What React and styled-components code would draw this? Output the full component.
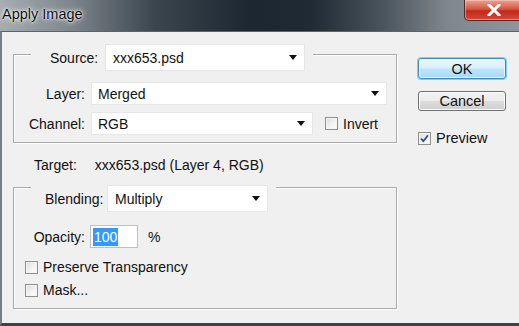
import React from "react";
import styled, { createGlobalStyle } from "styled-components";

const GlobalStyle = createGlobalStyle`
  html, body {
    margin: 0;
    padding: 0;
    background: #f0f0f0;
  }
  body {
    font-family: "Liberation Sans", Arial, sans-serif;
    font-size: 14px;
    color: #111;
  }
`;

const Window = styled.div`
  width: 519px;
  height: 326px;
  overflow: hidden;
  display: flex;
  flex-direction: column;
  background: #f0f0f0;
`;

const TitleBar = styled.div`
  height: 31px;
  flex: none;
  display: flex;
  align-items: flex-start;
  justify-content: space-between;
  background: linear-gradient(
    90deg,
    #a7adb1 0%,
    #7d858b 14%,
    #3a454e 30%,
    #1c2731 48%,
    #1f2a34 60%,
    #4b555d 74%,
    #80878c 86%,
    #8e9499 100%
  );
`;

const Title = styled.div`
  margin: 6px 0 0 2px;
  font-size: 14.5px;
  color: #0a0a0a;
  text-shadow: 0 0 6px #fff, 0 0 3px #fff, 0 0 1px #fff;
`;

const CloseButton = styled.div`
  width: 58px;
  height: 20px;
  margin-right: -5px;
  display: flex;
  align-items: center;
  justify-content: center;
  border: 1px solid #5a2420;
  border-top: none;
  border-radius: 0 0 5px 5px;
  background: linear-gradient(180deg, #e9a596 0%, #d8553f 45%, #c3281a 55%, #d24b36 100%);
  box-shadow: inset 0 0 0 1px rgba(255, 210, 200, 0.5);
`;

const Client = styled.div`
  flex: 1;
  display: flex;
  border-top: 1px solid #5b646c;
  border-left: 2px solid #767d83;
  border-bottom: 3px solid #3d4247;
  padding-left: 11px;
  background: #f0f0f0;
`;

const LeftColumn = styled.div`
  width: 384px;
  padding-top: 22px;
  display: flex;
  flex-direction: column;
`;

const GroupBox = styled.div`
  border: 1px solid #a9a9a9;
  box-shadow: inset 1px 1px 0 #fff, 1px 1px 0 #fff;
  display: flex;
  flex-direction: column;
  padding-bottom: ${({ $bottom }) => $bottom}px;
`;

const Legend = styled.div`
  display: flex;
  align-items: center;
  align-self: flex-start;
  margin: ${({ $top }) => $top}px 0 0 17px;
  padding: 0 8px 0 ${({ $pad }) => $pad}px;
  background: #f0f0f0;
  height: 27px;
`;

const LegendLabel = styled.span`
  width: ${({ $w }) => $w}px;
  flex: none;
  white-space: nowrap;
`;

const Row = styled.div`
  display: flex;
  align-items: center;
  height: ${({ $h }) => $h || 23}px;
  margin-top: ${({ $top }) => $top}px;
  padding-left: ${({ $pad }) => $pad || 0}px;
`;

const Label = styled.span`
  width: 71px;
  flex: none;
  text-align: right;
  margin-right: ${({ $gap }) => $gap}px;
  white-space: nowrap;
`;

const Select = styled.div`
  width: ${({ $w }) => $w}px;
  height: ${({ $h }) => $h || 23}px;
  box-sizing: border-box;
  flex: none;
  display: flex;
  align-items: center;
  justify-content: space-between;
  padding: 0 7px 0 ${({ $pad }) => $pad || 6}px;
  background: #fff;
  border: 1px solid #e6e6e6;
`;

const Arrow = styled.span`
  width: 0;
  height: 0;
  border-left: 4px solid transparent;
  border-right: 4px solid transparent;
  border-top: 5px solid #111;
`;

const Box = styled.span`
  width: 13px;
  height: 13px;
  box-sizing: border-box;
  flex: none;
  display: inline-flex;
  align-items: center;
  justify-content: center;
  border: 1px solid #8e8f8f;
  background: linear-gradient(135deg, #dcdcdc 0%, #f4f4f4 60%, #fbfbfb 100%);
  box-shadow: inset 0 0 0 1px #f4f4f4;
  margin-right: 5px;
`;

const Check = ({ checked }) => (
  <Box>
    {checked && (
      <svg width="9" height="9" viewBox="0 0 9 9">
        <path d="M1 4.6 L3.4 7.2 L8 1.2" fill="none" stroke="#2b4c91" strokeWidth="1.8" />
      </svg>
    )}
  </Box>
);

const Spacer = styled.span`
  width: ${({ $w }) => $w}px;
  flex: none;
`;

const TargetRow = styled.div`
  height: 16px;
  margin: 14px 0 14px 21px;
  display: flex;
  align-items: center;
  gap: 18px;
`;

const OpacityInput = styled.div`
  width: 48px;
  height: 23px;
  box-sizing: border-box;
  flex: none;
  display: flex;
  align-items: center;
  padding-left: 2px;
  background: #fff;
  border: 1px solid #b5c2cf;
`;

const Selected = styled.span`
  background: #3399ff;
  color: #fff;
  padding: 1px 1px;
  line-height: 16px;
`;

const Percent = styled.span`
  margin-left: 10px;
`;

const RightColumn = styled.div`
  margin-left: 21px;
  padding-top: 26px;
  display: flex;
  flex-direction: column;
  align-items: flex-start;
`;

const Button = styled.div`
  width: 88px;
  height: ${({ $h }) => $h}px;
  box-sizing: border-box;
  margin-top: ${({ $top }) => $top || 0}px;
  display: flex;
  align-items: center;
  justify-content: center;
  font-size: 14.5px;
  border-radius: 3px;
  border: 1px solid ${({ $primary }) => ($primary ? "#3d8fb8" : "#707070")};
  background: ${({ $primary }) =>
    $primary
      ? "linear-gradient(180deg, #eaf6fd 0%, #d9f0fc 48%, #bee6fd 52%, #a7d9f5 100%)"
      : "linear-gradient(180deg, #f2f2f2 0%, #ebebeb 48%, #dddddd 52%, #cfcfcf 100%)"};
  box-shadow: ${({ $primary }) =>
    $primary ? "0 0 0 1px #7fd0ee, inset 0 0 0 1px #e6f6fd" : "inset 0 0 0 1px #fbfbfb"};
`;

const PreviewRow = styled.div`
  margin-top: 19px;
  display: flex;
  align-items: center;
  font-size: 14.5px;
`;

export default function App() {
  return (
    <>
      <GlobalStyle />
      <Window>
        <TitleBar>
          <Title>Apply Image</Title>
          <CloseButton>
            <svg width="14" height="12" viewBox="0 0 14 12">
              <path d="M2 1 L12 11 M12 1 L2 11" stroke="#fff" strokeWidth="3" strokeLinecap="square" />
            </svg>
          </CloseButton>
        </TitleBar>
        <Client>
          <LeftColumn>
            <GroupBox $bottom={7}>
              <Legend $top={-11} $pad={19}>
                <LegendLabel $w={55}>Source:</LegendLabel>
                <Select $w={200} $h={27} $pad={7}>
                  xxx653.psd
                  <Arrow />
                </Select>
              </Legend>
              <Row $top={11}>
                <Label $gap={6}>Layer:</Label>
                <Select $w={296}>
                  Merged
                  <Arrow />
                </Select>
              </Row>
              <Row $top={7}>
                <Label $gap={6}>Channel:</Label>
                <Select $w={222}>
                  RGB
                  <Arrow />
                </Select>
                <Spacer $w={12} />
                <Check />
                <span>Invert</span>
              </Row>
            </GroupBox>

            <TargetRow>
              <span>Target:</span>
              <span>xxx653.psd (Layer 4, RGB)</span>
            </TargetRow>

            <GroupBox $bottom={10}>
              <Legend $top={-3} $pad={14}>
                <LegendLabel $w={62}>Blending:</LegendLabel>
                <Select $w={161} $h={27} $pad={7}>
                  Multiply
                  <Arrow />
                </Select>
              </Legend>
              <Row $top={13}>
                <Label $gap={5}>Opacity:</Label>
                <OpacityInput>
                  <Selected>100</Selected>
                </OpacityInput>
                <Percent>%</Percent>
              </Row>
              <Row $top={11} $h={16} $pad={11}>
                <Check />
                <span>Preserve Transparency</span>
              </Row>
              <Row $top={7} $h={16} $pad={11}>
                <Check />
                <span>Mask...</span>
              </Row>
            </GroupBox>
          </LeftColumn>

          <RightColumn>
            <Button $primary $h={21}>OK</Button>
            <Button $h={20} $top={12}>Cancel</Button>
            <PreviewRow>
              <Check checked />
              <span>Preview</span>
            </PreviewRow>
          </RightColumn>
        </Client>
      </Window>
    </>
  );
}
